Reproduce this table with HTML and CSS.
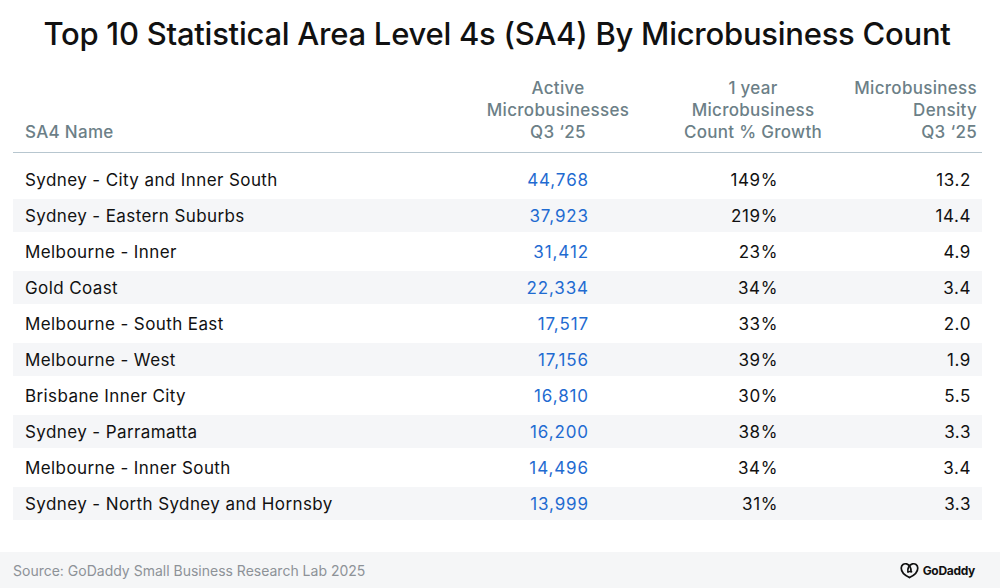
FILE: index.html
```html
<!DOCTYPE html>
<html lang="en">
<head>
<meta charset="utf-8">
<title>Top 10 SA4 By Microbusiness Count</title>
<link rel="stylesheet" href="styles.css">
</head>
<body>
<div class="page">
  <h1 class="title">Top 10 Statistical Area Level 4s (SA4) By Microbusiness Count</h1>
  <div class="table">
    <div class="row head">
      <div class="c1">SA4 Name</div>
      <div class="c2">Active<br>Microbusinesses<br>Q3 ‘25</div>
      <div class="c3">1 year<br>Microbusiness<br>Count % Growth</div>
      <div class="c4">Microbusiness<br>Density<br>Q3 ‘25</div>
    </div>
    <div class="body">
      <div class="row"><div class="c1">Sydney - City and Inner South</div><div class="c2">44,768</div><div class="c3">149%</div><div class="c4">13.2</div></div>
      <div class="row alt"><div class="c1">Sydney - Eastern Suburbs</div><div class="c2">37,923</div><div class="c3">219%</div><div class="c4">14.4</div></div>
      <div class="row"><div class="c1">Melbourne - Inner</div><div class="c2">31,412</div><div class="c3">23%</div><div class="c4">4.9</div></div>
      <div class="row alt"><div class="c1">Gold Coast</div><div class="c2">22,334</div><div class="c3">34%</div><div class="c4">3.4</div></div>
      <div class="row"><div class="c1">Melbourne - South East</div><div class="c2">17,517</div><div class="c3">33%</div><div class="c4">2.0</div></div>
      <div class="row alt"><div class="c1">Melbourne - West</div><div class="c2">17,156</div><div class="c3">39%</div><div class="c4">1.9</div></div>
      <div class="row"><div class="c1">Brisbane Inner City</div><div class="c2">16,810</div><div class="c3">30%</div><div class="c4">5.5</div></div>
      <div class="row alt"><div class="c1">Sydney - Parramatta</div><div class="c2">16,200</div><div class="c3">38%</div><div class="c4">3.3</div></div>
      <div class="row"><div class="c1">Melbourne - Inner South</div><div class="c2">14,496</div><div class="c3">34%</div><div class="c4">3.4</div></div>
      <div class="row alt"><div class="c1">Sydney - North Sydney and Hornsby</div><div class="c2">13,999</div><div class="c3">31%</div><div class="c4">3.3</div></div>
    </div>
  </div>
  <div class="footer">
    <span class="source">Source: GoDaddy Small Business Research Lab 2025</span>
    <span class="logo">
      <svg class="mark" viewBox="0 0 20 17" width="19" height="17" aria-hidden="true">
        <path d="M10 15.8 C5 13.5 1.2 10 1.3 5.8 C1.4 2.4 4.2 0.8 7 1.6 C10.2 2.5 12 6.2 11.6 9.6" fill="none" stroke="#111" stroke-width="1.8" stroke-linecap="round"/>
        <path d="M10 15.8 C15 13.5 18.8 10 18.7 5.8 C18.6 2.4 15.8 0.8 13 1.6 C9.6 2.6 7.6 6.4 8.4 10" fill="none" stroke="#111" stroke-width="1.8" stroke-linecap="round"/>
        <path d="M8.4 10 C9.6 9.4 11 9.4 12.2 9.8" fill="none" stroke="#111" stroke-width="1.6" stroke-linecap="round"/>
      </svg>
      <span class="brand">GoDaddy</span>
    </span>
  </div>
</div>
</body>
</html>
```
FILE: styles.css
```css
html, body {
  margin: 0;
  padding: 0;
  background: #ffffff;
}
body {
  font-family: Inter, "Liberation Sans", sans-serif;
  color: #111111;
}
.page {
  width: 1000px;
  height: 588px;
  display: flex;
  flex-direction: column;
}
.title {
  margin: 14px 0 0 0;
  padding-right: 6px;
  text-align: center;
  font-size: 31px;
  line-height: 40px;
  font-weight: 500;
  letter-spacing: -0.25px;
  color: #111111;
}
.table {
  margin: 23px 0 0 13px;
  width: 969px;
}
.row {
  display: grid;
  grid-template-columns: 457px 176px 204px 132px;
  align-items: center;
  height: 33px;
  font-size: 17px;
  letter-spacing: 0.4px;
}
.row > div {
  white-space: nowrap;
}
.row.alt {
  background: #f5f6f8;
}
.row .c1 { padding-left: 12px; }
.row .c2 { text-align: right; padding-right: 57px; color: #1f6bd1; letter-spacing: 0.9px; }
.row .c3 { text-align: right; padding-right: 72px; letter-spacing: 0.6px; }
.row .c4 { text-align: right; padding-right: 11px; letter-spacing: 0.6px; }

.row.head {
  height: auto;
  align-items: end;
  line-height: 22px;
  color: #6c7f87;
  font-weight: 500;
  padding-bottom: 9px;
  border-bottom: 1px solid #b7c6cf;
}
.row.head > div { letter-spacing: 0.3px; }
.row.head .c2 { text-align: center; padding-right: 0; color: #6c7f87; }
.row.head .c3 { text-align: center; padding-right: 0; padding-left: 10px; }
.row.head .c4 { text-align: right; padding-right: 5px; }

.body {
  margin-top: 10px;
  display: flex;
  flex-direction: column;
  gap: 3px;
}
.footer {
  margin-top: auto;
  height: 36px;
  background: #f5f6f7;
  display: flex;
  align-items: center;
  justify-content: space-between;
  padding: 0 25px 0 13px;
}
.source {
  font-size: 14px;
  color: #8d9297;
}
.logo {
  display: flex;
  align-items: center;
  gap: 4px;
}
.brand {
  font-size: 12px;
  font-weight: 700;
  letter-spacing: -0.3px;
  color: #111111;
}
```
